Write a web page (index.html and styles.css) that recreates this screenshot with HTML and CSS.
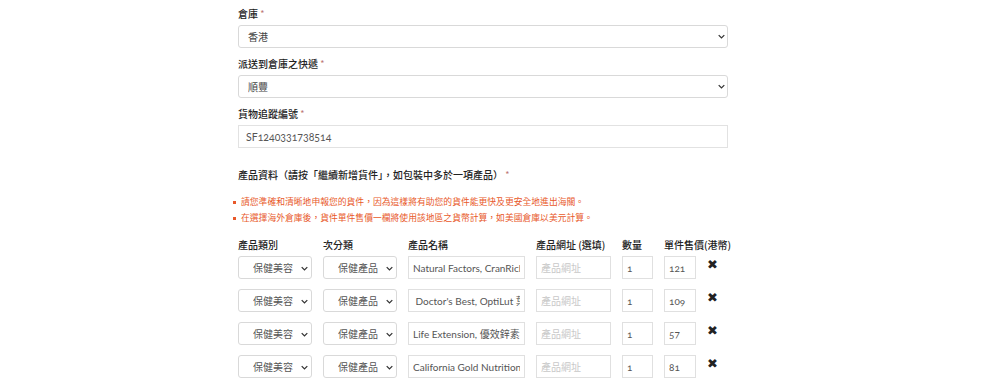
FILE: index.html
```html
<!DOCTYPE html>
<html lang="zh-Hant">
<head>
<meta charset="utf-8">
<link rel="stylesheet" href="styles.css">
</head>
<body>
<div class="form">
  <div class="field">
    <div class="label">倉庫 <span class="req">*</span></div>
    <div class="sel wide">
      <select><option>香港</option></select>
      <svg class="chev" viewBox="0 0 10 6" width="7" height="5"><path d="M1 1l4 4 4-4" fill="none" stroke="#333" stroke-width="1.8"/></svg>
    </div>
  </div>
  <div class="field">
    <div class="label">派送到倉庫之快遞 <span class="req">*</span></div>
    <div class="sel wide">
      <select><option>順豐</option></select>
      <svg class="chev" viewBox="0 0 10 6" width="7" height="5"><path d="M1 1l4 4 4-4" fill="none" stroke="#333" stroke-width="1.8"/></svg>
    </div>
  </div>
  <div class="field">
    <div class="label">貨物追蹤編號 <span class="req">*</span></div>
    <input class="txt wide" value="SF1240331738514">
  </div>

  <div class="label section">產品資料（請按「繼續新增貨件」，如包裝中多於一項產品） <span class="req">*</span></div>
  <ul class="notes">
    <li>請您準確和清晰地申報您的貨件，因為這樣將有助您的貨件能更快及更安全地進出海關。</li>
    <li>在選擇海外倉庫後，貨件單件售價一欄將使用該地區之貨幣計算，如美國倉庫以美元計算。</li>
  </ul>

  <div class="grid">
    <div class="th">產品類別</div>
    <div class="th">次分類</div>
    <div class="th">產品名稱</div>
    <div class="th">產品網址 (選填)</div>
    <div class="th">數量</div>
    <div class="th">單件售價(港幣)</div>
    <div class="th"></div>

    <div class="sel row"><select><option>保健美容</option></select><svg class="chev" viewBox="0 0 10 6" width="7" height="5"><path d="M1 1l4 4 4-4" fill="none" stroke="#333" stroke-width="1.8"/></svg></div>
    <div class="sel row"><select><option>保健產品</option></select><svg class="chev" viewBox="0 0 10 6" width="7" height="5"><path d="M1 1l4 4 4-4" fill="none" stroke="#333" stroke-width="1.8"/></svg></div>
    <input class="cell" value="Natural Factors, CranRich 蔓越莓">
    <input class="cell" placeholder="產品網址">
    <input class="cell" value="1">
    <input class="cell" value="121">
    <span class="del">✖</span>

    <div class="sel row"><select><option>保健美容</option></select><svg class="chev" viewBox="0 0 10 6" width="7" height="5"><path d="M1 1l4 4 4-4" fill="none" stroke="#333" stroke-width="1.8"/></svg></div>
    <div class="sel row"><select><option>保健產品</option></select><svg class="chev" viewBox="0 0 10 6" width="7" height="5"><path d="M1 1l4 4 4-4" fill="none" stroke="#333" stroke-width="1.8"/></svg></div>
    <input class="cell" value=" Doctor's Best, OptiLut 葉黃素">
    <input class="cell" placeholder="產品網址">
    <input class="cell" value="1">
    <input class="cell" value="109">
    <span class="del">✖</span>

    <div class="sel row"><select><option>保健美容</option></select><svg class="chev" viewBox="0 0 10 6" width="7" height="5"><path d="M1 1l4 4 4-4" fill="none" stroke="#333" stroke-width="1.8"/></svg></div>
    <div class="sel row"><select><option>保健產品</option></select><svg class="chev" viewBox="0 0 10 6" width="7" height="5"><path d="M1 1l4 4 4-4" fill="none" stroke="#333" stroke-width="1.8"/></svg></div>
    <input class="cell" value="Life Extension, 優效鋅素補充">
    <input class="cell" placeholder="產品網址">
    <input class="cell" value="1">
    <input class="cell" value="57">
    <span class="del">✖</span>

    <div class="sel row"><select><option>保健美容</option></select><svg class="chev" viewBox="0 0 10 6" width="7" height="5"><path d="M1 1l4 4 4-4" fill="none" stroke="#333" stroke-width="1.8"/></svg></div>
    <div class="sel row"><select><option>保健產品</option></select><svg class="chev" viewBox="0 0 10 6" width="7" height="5"><path d="M1 1l4 4 4-4" fill="none" stroke="#333" stroke-width="1.8"/></svg></div>
    <input class="cell" value="California Gold Nutrition, 益生菌">
    <input class="cell" placeholder="產品網址">
    <input class="cell" value="1">
    <input class="cell" value="81">
    <span class="del">✖</span>
  </div>
</div>
</body>
</html>
```
FILE: styles.css
```css
* { box-sizing: border-box; }
html, body { margin: 0; padding: 0; background: #fff; }
body {
  font-family: "Lato", "Noto Sans CJK TC", sans-serif;
  color: #333;
  font-size: 11px;
}
.form {
  width: 490px;
  margin-left: 238px;
  padding-top: 7px;
}
.field { margin-bottom: 9px; }
.label {
  font-family: "Noto Sans CJK TC", sans-serif;
  font-size: 10px;
  font-weight: 500;
  line-height: 14px;
  color: #222;
  margin-bottom: 4px;
}
.req { color: #b77; font-weight: 400; font-size: 9px; vertical-align: top; }
.section { margin-top: 20px; margin-bottom: 12px; }
.sel { position: relative; }
.sel select {
  appearance: none;
  -webkit-appearance: none;
  width: 100%;
  height: 23px;
  border: 1px solid #d9d9d9;
  border-radius: 3px;
  background: #fff;
  font-family: "Lato", "Noto Sans CJK TC", sans-serif;
  font-size: 10px;
  color: #444;
  padding: 0 0 0 9px;
  margin: 0;
  outline: none;
}
.sel .chev {
  position: absolute;
  right: 3px;
  top: 9px;
  pointer-events: none;
}
.sel.row select { padding-left: 14px; font-size: 10px; color: #555; }
.sel.row .chev { right: 4px; top: 10px; }
.wide { width: 490px; display: block; }
.txt {
  height: 23px;
  border: 1px solid #e2e2e2;
  border-radius: 0;
  padding: 0 7px;
  font-family: "Lato", "Noto Sans CJK TC", sans-serif;
  font-variant-numeric: oldstyle-nums;
  font-size: 10.5px;
  color: #555;
  outline: none;
  margin: 0;
}
.notes {
  margin: 0 0 12px 0;
  padding: 0 0 0 3px;
  list-style: none;
}
.notes li {
  font-family: "Noto Sans CJK TC", sans-serif;
  color: #e8592a;
  font-size: 8.8px;
  line-height: 16px;
  position: relative;
}
.notes li::before {
  content: "";
  position: absolute;
  left: -8px;
  top: 7px;
  width: 3px;
  height: 3px;
  background: #e8592a;
}
.grid {
  display: grid;
  grid-template-columns: 74px 74px 117px 75px 31px 32px 20px;
  column-gap: 11px;
  row-gap: 10px;
  align-items: center;
}
.th {
  font-family: "Noto Sans CJK TC", sans-serif;
  font-size: 10px;
  font-weight: 500;
  line-height: 14px;
  color: #222;
  margin-bottom: -6px;
  white-space: nowrap;
}
.cell {
  width: 100%;
  height: 23px;
  border: 1px solid #e0e0e0;
  border-radius: 0;
  padding: 0 4px;
  margin: 0;
  font-family: "Lato", "Noto Sans CJK TC", sans-serif;
  font-variant-numeric: oldstyle-nums;
  font-size: 10px;
  color: #555;
  outline: none;
  background: #fff;
}
.cell::placeholder { color: #c8c8c8; }
.del {
  font-family: "DejaVu Sans", sans-serif;
  font-size: 13px;
  color: #222;
  margin-left: 0;
  margin-top: -6px;
}
```
